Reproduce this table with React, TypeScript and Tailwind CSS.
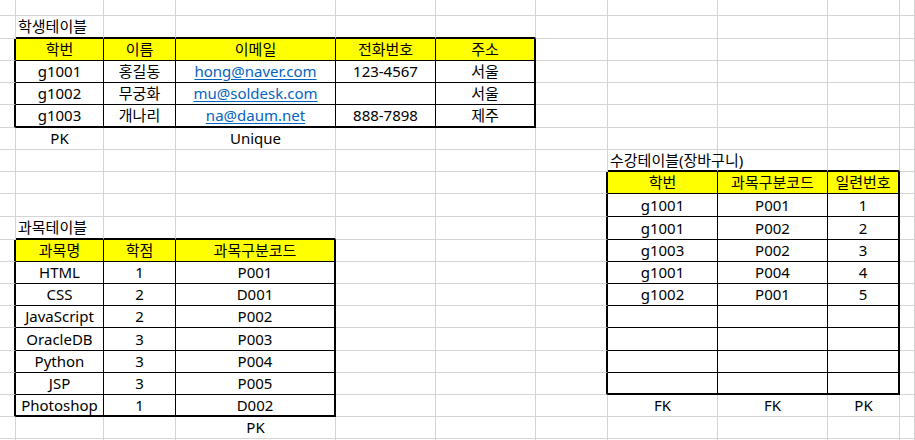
import React from "react";

type Cell = { text: string; left?: boolean; yellow?: boolean; link?: boolean };

const ROWS = 21;
const COLS = 11;

// 시트 셀 내용: [row, col, text]
const sheet: Record<string, Cell> = {};
const put = (r: number, c: number, text: string, opt: Partial<Cell> = {}) => {
  sheet[`${r}-${c}`] = { text, ...opt };
};

// 학생테이블
put(1, 1, "학생테이블", { left: true });
["학번", "이름", "이메일", "전화번호", "주소"].forEach((t, i) => put(2, 1 + i, t, { yellow: true }));
[
  ["g1001", "홍길동", "hong@naver.com", "123-4567", "서울"],
  ["g1002", "무궁화", "mu@soldesk.com", "", "서울"],
  ["g1003", "개나리", "na@daum.net", "888-7898", "제주"],
].forEach((row, r) => row.forEach((t, i) => put(3 + r, 1 + i, t, { link: i === 2 })));
put(6, 1, "PK");
put(6, 3, "Unique");

// 과목테이블
put(10, 1, "과목테이블", { left: true });
["과목명", "학점", "과목구분코드"].forEach((t, i) => put(11, 1 + i, t, { yellow: true }));
[
  ["HTML", "1", "P001"],
  ["CSS", "2", "D001"],
  ["JavaScript", "2", "P002"],
  ["OracleDB", "3", "P003"],
  ["Python", "3", "P004"],
  ["JSP", "3", "P005"],
  ["Photoshop", "1", "D002"],
].forEach((row, r) => row.forEach((t, i) => put(12 + r, 1 + i, t)));
put(19, 3, "PK");

// 수강테이블
put(7, 7, "수강테이블(장바구니)", { left: true });
["학번", "과목구분코드", "일련번호"].forEach((t, i) => put(8, 7 + i, t, { yellow: true }));
[
  ["g1001", "P001", "1"],
  ["g1001", "P002", "2"],
  ["g1003", "P002", "3"],
  ["g1001", "P004", "4"],
  ["g1002", "P001", "5"],
].forEach((row, r) => row.forEach((t, i) => put(9 + r, 7 + i, t)));
put(18, 7, "FK");
put(18, 8, "FK");
put(18, 9, "PK");

// 표 테두리 영역: [r0, r1, c0, c1]
const tables = [
  [2, 5, 1, 5],
  [11, 18, 1, 3],
  [8, 17, 7, 9],
];

type Edge = "grid" | "thin" | "thick";

const edges = (r: number, c: number): { right: Edge; bottom: Edge } => {
  let right: Edge = "grid";
  let bottom: Edge = "grid";
  for (const [r0, r1, c0, c1] of tables) {
    const inRow = r >= r0 && r <= r1;
    const inCol = c >= c0 && c <= c1;
    if (inRow && inCol) {
      right = c === c1 ? "thick" : "thin";
      bottom = r === r1 ? "thick" : "thin";
    }
    if (inCol && r === r0 - 1) bottom = "thick";
    if (inRow && c === c0 - 1) right = "thick";
  }
  return { right, bottom };
};

const RIGHT: Record<Edge, string> = {
  grid: "border-r border-r-[#d4d4d4]",
  thin: "border-r border-r-black",
  thick: "border-r-2 border-r-black",
};
const BOTTOM: Record<Edge, string> = {
  grid: "border-b border-b-[#d4d4d4]",
  thin: "border-b border-b-black",
  thick: "border-b-2 border-b-black",
};

const App = () => {
  const cells = [];
  for (let r = 0; r < ROWS; r++) {
    for (let c = 0; c < COLS; c++) {
      const cell = sheet[`${r}-${c}`];
      const e = edges(r, c);
      cells.push(
        <div
          key={`${r}-${c}`}
          className={`flex items-center whitespace-nowrap overflow-visible ${RIGHT[e.right]} ${BOTTOM[e.bottom]} ${
            cell?.left ? "justify-start pl-[2px]" : "justify-center"
          } ${cell?.yellow ? "bg-[#ffff00]" : ""}`}
        >
          {cell &&
            (cell.link ? (
              <span className="text-[#0563c1] underline underline-offset-2">{cell.text}</span>
            ) : (
              <span>{cell.text}</span>
            ))}
        </div>
      );
    }
  }

  return (
    <div className="w-[915px] h-[440px] overflow-hidden bg-white text-black text-[15px] leading-none font-['Noto_Sans','Noto_Sans_CJK_KR',sans-serif]">
      <div className="grid grid-cols-[16px_88px_72px_160px_100px_100px_72px_110px_110px_72px_15px] grid-rows-[16px_23px_22px_22px_22px_23px_22px_22px_22px_23px_23px_22px_22px_22px_22px_23px_22px_22px_22px_22px_10px]">
        {cells}
      </div>
    </div>
  );
};

export default App;
